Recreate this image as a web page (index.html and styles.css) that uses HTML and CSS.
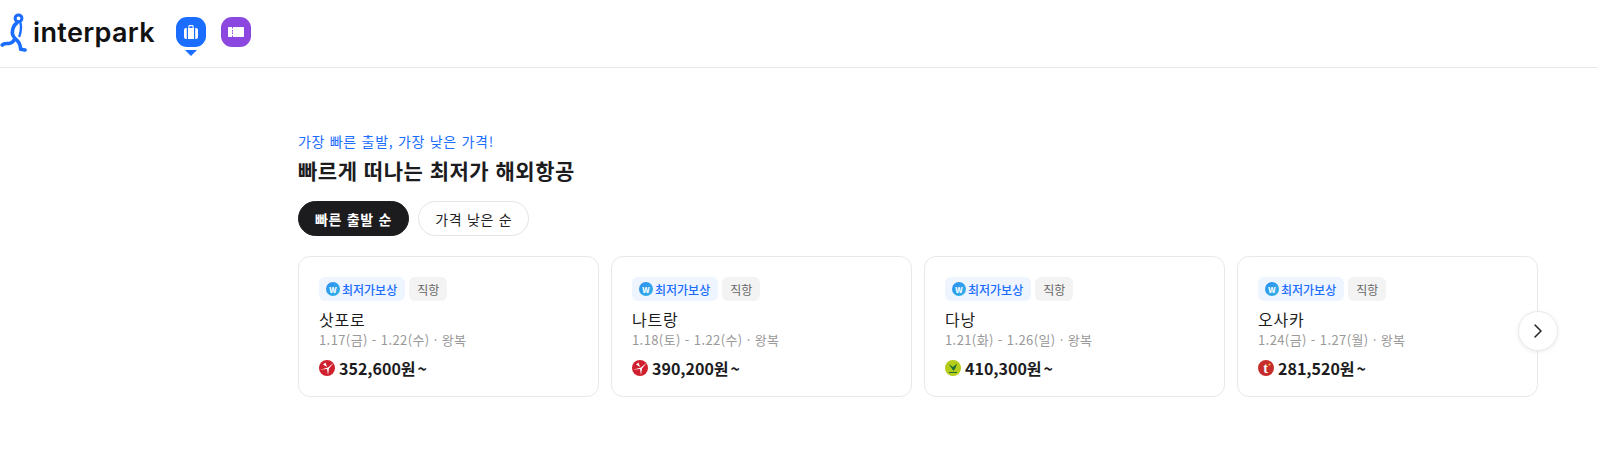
FILE: index.html
```html
<!DOCTYPE html>
<html lang="ko">
    <head>
        <meta charset="UTF-8">
        <title>interpark</title>
        <link rel="stylesheet" href="styles.css">
    </head>
    <body>
        <header class="header">
            <a class="logo">
                <svg class="logo-mark" width="30" height="40" viewBox="0 0 30 40" fill="none" stroke="#1a6dff" stroke-linecap="round" stroke-linejoin="round">
                    <circle cx="18.500" cy="6.300" r="3.400" stroke-width="3"/>
                    <path d="M17 10.700C14 13 12.300 17 12.300 21C12.500 24.500 15 26.500 16.700 28C18.800 30 20.500 33 20.700 37.300L25 38" stroke-width="3.600"/>
                    <path d="M2.300 33C4 31 7 31.800 10 31.300C12 30.800 13.500 29.500 14.500 27.500" stroke-width="3.600"/>
                    <path d="M20.500 11C21.500 15 21 19 19.500 24" stroke-width="2.400"/>
                </svg>
                <span class="logo-text">interpark</span>
            </a>
            <nav class="service-nav">
                <a class="service service-active">
                    <span class="service-icon service-blue">
                        <svg width="14" height="14" viewBox="0 0 14 14" fill="#fff">
                            <path d="M4.300 3V1.500C4.300.7 5 0 5.800 0h2.400c.8 0 1.500.7 1.500 1.500V3H8.600V1.200H5.400V3z"/>
                            <path d="M2.800 3H2C.9 3 0 3.900 0 5v7c0 1.100.9 2 2 2h.8zM4 3h6v11H4zM11.200 3h.8c1.100 0 2 .9 2 2v7c0 1.100-.9 2-2 2h-.8z"/>
                        </svg>
                    </span>
                </a>
                <a class="service">
                    <span class="service-icon service-purple">
                        <svg width="16" height="10" viewBox="0 0 16 10" fill="#fff">
                            <path d="M1 0h3v1.500h1V0h10c.6 0 1 .4 1 1v8c0 .6-.4 1-1 1H5V8.500H4V10H1c-.6 0-1-.4-1-1V1c0-.6.4-1 1-1zM4 3v1.500h1V3zm0 2.500V7h1V5.500z"/>
                        </svg>
                    </span>
                </a>
            </nav>
        </header>

        <main class="section">
            <p class="eyebrow">가장 빠른 출발, 가장 낮은 가격!</p>
            <h2 class="title">빠르게 떠나는 최저가 해외항공</h2>

            <div class="tabs">
                <button class="tab tab-on">빠른 출발 순</button>
                <button class="tab">가격 낮은 순</button>
            </div>

            <div class="cards">
                <div class="card">
                    <div class="badges">
                        <span class="badge badge-blue"><span class="w-mark">w</span>최저가보상</span>
                        <span class="badge badge-gray">직항</span>
                    </div>
                    <div class="city">삿포로</div>
                    <div class="date">1.17(금) - 1.22(수) · 왕복</div>
                    <div class="price">
                        <svg class="airline" viewBox="0 0 16 16"><circle cx="8" cy="8" r="8" fill="#d0202e"/><path d="M1 9.800L9 7.500 15 2.500 10 8.500 9 15 8 9zM4 4.500L8 7 6.500 2.500z" fill="#fff"/></svg>
                        352,600원<span class="tilde">~</span>
                    </div>
                </div>
                <div class="card">
                    <div class="badges">
                        <span class="badge badge-blue"><span class="w-mark">w</span>최저가보상</span>
                        <span class="badge badge-gray">직항</span>
                    </div>
                    <div class="city">나트랑</div>
                    <div class="date">1.18(토) - 1.22(수) · 왕복</div>
                    <div class="price">
                        <svg class="airline" viewBox="0 0 16 16"><circle cx="8" cy="8" r="8" fill="#d0202e"/><path d="M1 9.800L9 7.500 15 2.500 10 8.500 9 15 8 9zM4 4.500L8 7 6.500 2.500z" fill="#fff"/></svg>
                        390,200원<span class="tilde">~</span>
                    </div>
                </div>
                <div class="card">
                    <div class="badges">
                        <span class="badge badge-blue"><span class="w-mark">w</span>최저가보상</span>
                        <span class="badge badge-gray">직항</span>
                    </div>
                    <div class="city">다낭</div>
                    <div class="date">1.21(화) - 1.26(일) · 왕복</div>
                    <div class="price">
                        <svg class="airline" viewBox="0 0 16 16"><circle cx="8" cy="8" r="8" fill="#b5cc18"/><path d="M3.500 4L8 7 12 3.500 10.500 8 8.500 11 6.500 8z" fill="#1f6b3a"/><path d="M4 12.500h8" stroke="#1f6b3a" stroke-width="1"/></svg>
                        410,300원<span class="tilde">~</span>
                    </div>
                </div>
                <div class="card">
                    <div class="badges">
                        <span class="badge badge-blue"><span class="w-mark">w</span>최저가보상</span>
                        <span class="badge badge-gray">직항</span>
                    </div>
                    <div class="city">오사카</div>
                    <div class="date">1.24(금) - 1.27(월) · 왕복</div>
                    <div class="price">
                        <svg class="airline" viewBox="0 0 16 16"><circle cx="8" cy="8" r="8" fill="#c62d2a"/><text x="7.500" y="13" text-anchor="middle" font-family="Liberation Serif" font-weight="700" font-size="14" fill="#fff">t</text><circle cx="11.500" cy="4.500" r="1.100" fill="#f0c040"/></svg>
                        281,520원<span class="tilde">~</span>
                    </div>
                </div>
                <button class="next">
                    <svg width="10" height="16" viewBox="0 0 10 16" fill="none" stroke="#222" stroke-width="1.500" stroke-linecap="round" stroke-linejoin="round"><path d="M2 2l6 6-6 6"/></svg>
                </button>
            </div>
        </main>
    </body>
</html>
```

FILE: styles.css
```css
* {
    box-sizing: border-box;
}

body {
    margin: 0;
    background: #fff;
    color: #1c1c1e;
    font-family: "Noto Sans CJK KR", "Noto Sans", sans-serif;
}

.header {
    display: flex;
    align-items: flex-start;
    height: 68px;
    border-bottom: 1px solid #e8e8e8;
}

.logo {
    display: flex;
    align-items: center;
    margin-top: 12px;
    height: 40px;
}

.logo-mark {
    flex: none;
}

.logo-text {
    margin-left: 3px;
    font-family: "Inter", sans-serif;
    font-size: 27px;
    font-weight: 600;
    letter-spacing: 0.35px;
    color: #111;
}

.service-nav {
    display: flex;
    gap: 15px;
    margin-left: 21px;
    margin-top: 17px;
}

.service {
    position: relative;
    display: block;
}

.service-icon {
    display: flex;
    align-items: center;
    justify-content: center;
    width: 30px;
    height: 30px;
    border-radius: 11px;
}

.service-blue { background: #1a6dff; }
.service-purple { background: #8c47e0; }

.service-active::after {
    content: "";
    position: absolute;
    left: 9px;
    top: 33px;
    border-left: 6px solid transparent;
    border-right: 6px solid transparent;
    border-top: 6px solid #1a6dff;
}

.section {
    padding: 63px 0 0 298px;
}

.eyebrow {
    margin: 0;
    font-size: 14px;
    line-height: 20px;
    letter-spacing: 0.7px;
    color: #1a6dff;
}

.title {
    margin: 5px 0 0;
    font-size: 21px;
    line-height: 28px;
    font-weight: 700;
    letter-spacing: 0.5px;
}

.tabs {
    display: flex;
    gap: 9px;
    margin-top: 17px;
}

.tab {
    height: 35px;
    padding: 0 16px;
    border: 1px solid #e4e4e4;
    border-radius: 18px;
    background: #fff;
    color: #222;
    font-family: inherit;
    font-size: 14px;
    letter-spacing: 0.7px;
}

.tab-on {
    border-color: #1c1c1e;
    background: #1c1c1e;
    color: #fff;
    font-weight: 700;
}

.cards {
    position: relative;
    display: flex;
    gap: 12px;
    margin-top: 20px;
    width: 1240px;
}

.card {
    width: 301px;
    height: 141px;
    padding: 20px 20px 0;
    border: 1px solid #e8e8e8;
    border-radius: 12px;
}

.badges {
    display: flex;
    gap: 4px;
}

.badge {
    display: flex;
    align-items: center;
    height: 24px;
    border-radius: 6px;
    font-size: 12px;
}

.badge-blue {
    padding: 0 8px 0 7px;
    background: #eef5ff;
    color: #1a6dff;
    font-weight: 500;
}

.badge-gray {
    padding: 0 8px;
    background: #f3f3f3;
    color: #666;
}

.w-mark {
    display: flex;
    align-items: center;
    justify-content: center;
    width: 14px;
    height: 14px;
    margin-right: 2px;
    border-radius: 50%;
    background: linear-gradient(135deg, #2f8df0, #30b5e8);
    color: #fff;
    font-size: 9px;
    font-weight: 700;
    line-height: 1;
}

.city {
    margin-top: 7px;
    font-size: 16px;
    line-height: 22px;
    letter-spacing: 0.8px;
}

.date {
    font-size: 13px;
    line-height: 20px;
    letter-spacing: 0.4px;
    color: #999;
}

.price {
    display: flex;
    align-items: center;
    margin-top: 7px;
    font-size: 16px;
    line-height: 22px;
    font-weight: 700;
    color: #1c1c1e;
}

.airline {
    width: 16px;
    height: 16px;
    margin-right: 4px;
}

.tilde {
    margin-left: 2px;
}

.next {
    position: absolute;
    right: -20px;
    top: 55px;
    display: flex;
    align-items: center;
    justify-content: center;
    width: 40px;
    height: 40px;
    padding: 0;
    border: 1px solid #eaeaea;
    border-radius: 50%;
    background: #fff;
    box-shadow: 0 1px 4px rgba(0, 0, 0, 0.08);
}
```
